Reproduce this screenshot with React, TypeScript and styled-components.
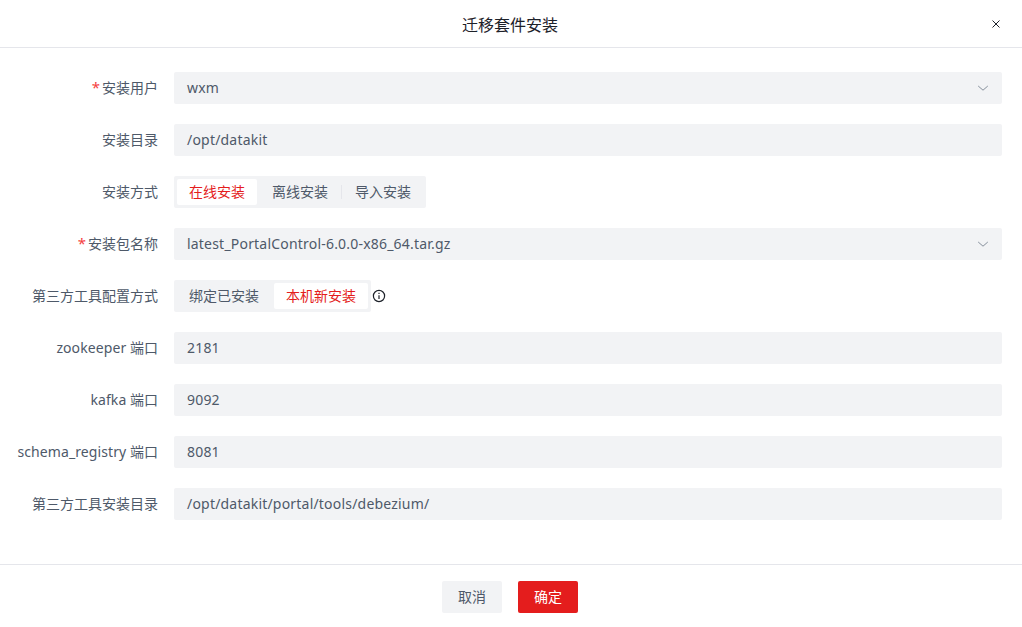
import { createGlobalStyle } from "styled-components";
import styled from "styled-components";

const GlobalStyle = createGlobalStyle`
  html, body {
    margin: 0;
    padding: 0;
    background: #fff;
  }
  body {
    font-family: "Noto Sans", "Noto Sans CJK SC", sans-serif;
    font-size: 14px;
  }
`;

const Modal = styled.div`
  width: 1022px;
  height: 627px;
  display: flex;
  flex-direction: column;
  background: #fff;
  overflow: hidden;
`;

const Header = styled.header`
  height: 47px;
  flex: none;
  display: flex;
  align-items: center;
  justify-content: center;
  padding-right: 2px;
  position: relative;
  border-bottom: 1px solid #e5e6eb;
  font-size: 16px;
  color: #1d2129;
`;

const CloseButton = styled.span`
  position: absolute;
  right: 21px;
  top: 19px;
  display: flex;
  color: #1d2129;
`;

const Form = styled.div`
  flex: 1;
  display: flex;
  flex-direction: column;
  gap: 20px;
  padding: 24px 20px 0 0;
`;

const Row = styled.div`
  display: grid;
  grid-template-columns: 158px 828px;
  column-gap: 16px;
  height: 32px;
  align-items: center;
`;

const Label = styled.label`
  height: 32px;
  text-align: right;
  color: #4e5969;
  white-space: nowrap;
  line-height: 31px;
`;

const Latin = styled.span`
  letter-spacing: 0.1px;
`;

const Star = styled.span`
  color: #f53f3f;
  font-size: 15px;
  line-height: 1;
  margin-right: 2px;
`;

const Input = styled.div`
  height: 32px;
  box-sizing: border-box;
  display: flex;
  align-items: center;
  justify-content: space-between;
  padding: 0 13px 1px;
  background: #f2f3f5;
  border-radius: 2px;
  color: #4e5969;
  letter-spacing: 0.2px;
`;

const Chevron = styled.svg`
  width: 12px;
  height: 12px;
  color: #86909c;
`;

const RadioLine = styled.div`
  display: flex;
  align-items: center;
  gap: 1px;
`;

const RadioGroup = styled.div`
  height: 32px;
  display: inline-flex;
  align-items: center;
  gap: 3px;
  padding: 0 3px;
  background: #f2f3f5;
  border-radius: 2px;
`;

const RadioItem = styled.span<{ $active?: boolean; $divided?: boolean }>`
  height: 26px;
  box-sizing: border-box;
  display: flex;
  align-items: center;
  padding: 0 12px 2px;
  position: relative;
  border-radius: 2px;
  background: ${(props) => (props.$active ? "#fff" : "transparent")};
  color: ${(props) => (props.$active ? "#e41d1d" : "#4e5969")};

  &::before {
    content: "";
    display: ${(props) => (props.$divided ? "block" : "none")};
    position: absolute;
    left: -2px;
    top: 6px;
    width: 1px;
    height: 14px;
    background: #e5e6eb;
  }
`;

const InfoIcon = styled.svg`
  width: 14px;
  height: 14px;
  margin-top: -1px;
  color: #1d2129;
`;

const Footer = styled.footer`
  height: 63px;
  box-sizing: border-box;
  flex: none;
  display: flex;
  justify-content: center;
  gap: 16px;
  padding: 16px 2px 0 0;
  border-top: 1px solid #e5e6eb;
`;

const Button = styled.button<{ $primary?: boolean }>`
  width: 60px;
  height: 32px;
  padding: 0 0 2px;
  border: none;
  border-radius: 2px;
  font: inherit;
  background: ${(props) => (props.$primary ? "#e41d1d" : "#f2f3f5")};
  color: ${(props) => (props.$primary ? "#fff" : "#4e5969")};
`;

const ChevronDown = () => (
  <Chevron viewBox="0 0 12 12" fill="none" stroke="currentColor" strokeWidth="1">
    <path d="M1.2 4 6 8.2 10.8 4" />
  </Chevron>
);

const inputs = [
  { name: "zookeeper", value: "2181" },
  { name: "kafka", value: "9092" },
  { name: "schema_registry", value: "8081" },
];

const App = () => {
  return (
    <Modal>
      <GlobalStyle />
      <Header>
        迁移套件安装
        <CloseButton>
          <svg width="10" height="10" viewBox="0 0 10 10" fill="none" stroke="currentColor" strokeWidth="1">
            <path d="M1.5 1.5l7 7M8.5 1.5l-7 7" />
          </svg>
        </CloseButton>
      </Header>
      <Form>
        <Row>
          <Label>
            <Star>*</Star>安装用户
          </Label>
          <Input>
            wxm
            <ChevronDown />
          </Input>
        </Row>
        <Row>
          <Label>安装目录</Label>
          <Input>/opt/datakit</Input>
        </Row>
        <Row>
          <Label>安装方式</Label>
          <RadioLine>
            <RadioGroup>
              <RadioItem $active>在线安装</RadioItem>
              <RadioItem>离线安装</RadioItem>
              <RadioItem $divided>导入安装</RadioItem>
            </RadioGroup>
          </RadioLine>
        </Row>
        <Row>
          <Label>
            <Star>*</Star>安装包名称
          </Label>
          <Input>
            latest_PortalControl-6.0.0-x86_64.tar.gz
            <ChevronDown />
          </Input>
        </Row>
        <Row>
          <Label>第三方工具配置方式</Label>
          <RadioLine>
            <RadioGroup>
              <RadioItem>绑定已安装</RadioItem>
              <RadioItem $active>本机新安装</RadioItem>
            </RadioGroup>
            <InfoIcon viewBox="0 0 14 14" fill="none" stroke="currentColor" strokeWidth="1.2">
              <circle cx="7" cy="7" r="5.6" />
              <path d="M7 6.2v3.8M7 3.8v1.3" />
            </InfoIcon>
          </RadioLine>
        </Row>
        {inputs.map((item) => (
          <Row key={item.name}>
            <Label>
              <Latin>{item.name}</Latin> 端口
            </Label>
            <Input>{item.value}</Input>
          </Row>
        ))}
        <Row>
          <Label>第三方工具安装目录</Label>
          <Input>/opt/datakit/portal/tools/debezium/</Input>
        </Row>
      </Form>
      <Footer>
        <Button>取消</Button>
        <Button $primary>确定</Button>
      </Footer>
    </Modal>
  );
};

export default App;
